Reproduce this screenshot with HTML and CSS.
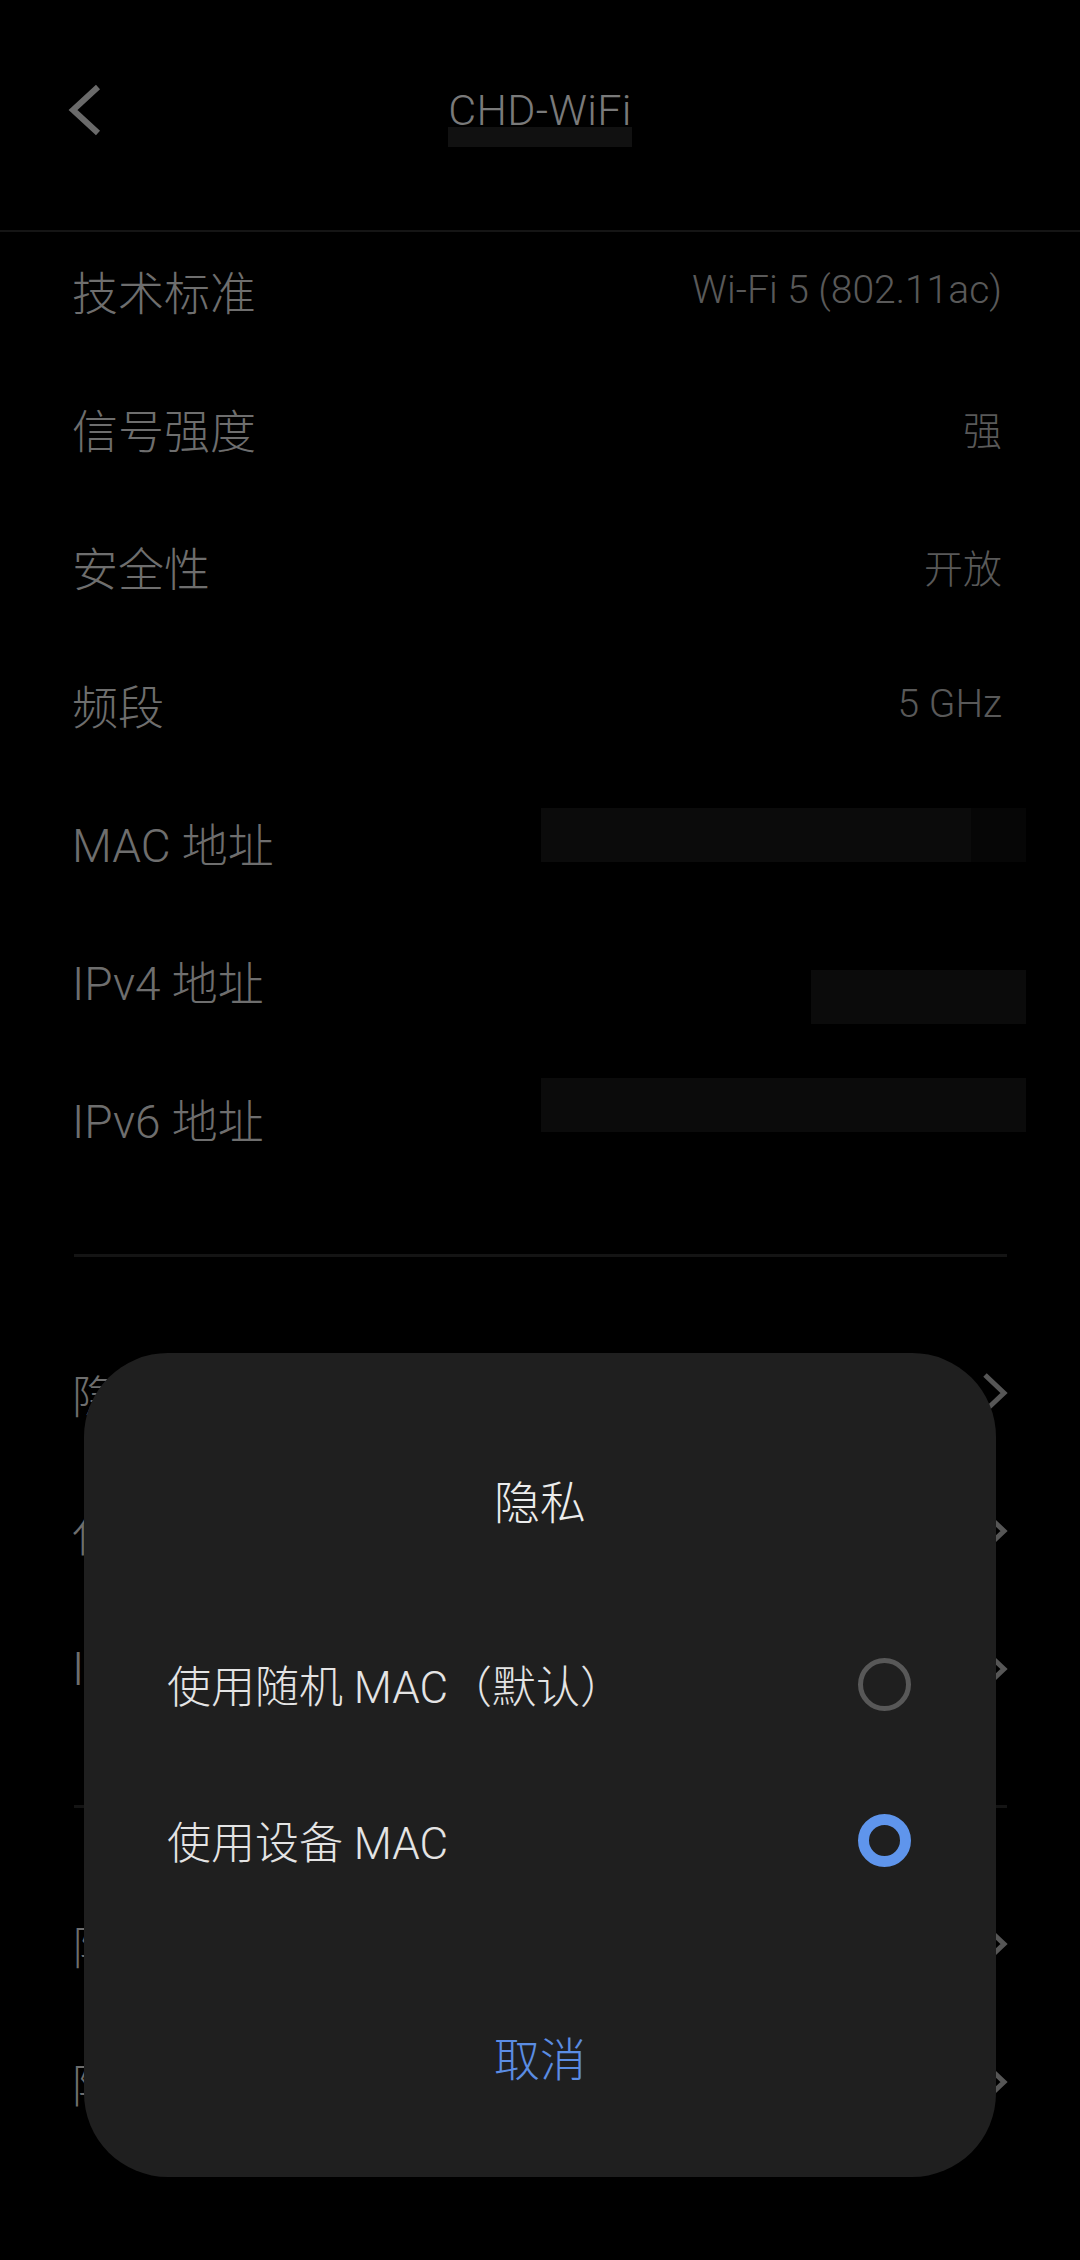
FILE: index.html
```html
<!DOCTYPE html>
<html lang="zh-CN">
<head>
<meta charset="utf-8">
<title>CHD-WiFi</title>
<link rel="stylesheet" href="styles.css">
</head>
<body>
<div class="screen">
  <header class="header">
    <div class="back">
      <svg width="36" height="52" viewBox="0 0 36 52"><polyline points="31,3 6,26 31,49" fill="none" stroke="#6a6a6a" stroke-width="6"/></svg>
    </div>
    <div class="title">CHD-WiFi</div>
    <div class="spacer"></div>
  </header>

  <section class="list">
    <div class="row"><span class="label">技术标准</span><span class="value">Wi-Fi 5 (802.11ac)</span></div>
    <div class="row"><span class="label">信号强度</span><span class="value">强</span></div>
    <div class="row"><span class="label">安全性</span><span class="value">开放</span></div>
    <div class="row"><span class="label">频段</span><span class="value">5 GHz</span></div>
    <div class="row"><span class="label">MAC 地址</span><span class="mask mask-mac"></span></div>
    <div class="row"><span class="label">IPv4 地址</span><span class="mask mask-v4"></span></div>
    <div class="row"><span class="label">IPv6 地址</span><span class="mask mask-v6"></span></div>
  </section>

  <div class="divider"></div>

  <section class="list list-links">
    <div class="row"><span class="label">隐私</span><span class="chev"><svg width="26" height="42" viewBox="0 0 26 42"><polyline points="3,3 22,21 3,39" fill="none" stroke="#565656" stroke-width="5"/></svg></span></div>
    <div class="row"><span class="label">代理</span><span class="chev"><svg width="26" height="42" viewBox="0 0 26 42"><polyline points="3,3 22,21 3,39" fill="none" stroke="#565656" stroke-width="5"/></svg></span></div>
    <div class="row"><span class="label">IP</span><span class="chev"><svg width="26" height="42" viewBox="0 0 26 42"><polyline points="3,3 22,21 3,39" fill="none" stroke="#565656" stroke-width="5"/></svg></span></div>
  </section>

  <div class="divider"></div>

  <section class="list list-links">
    <div class="row"><span class="label">限制流量</span><span class="chev"><svg width="26" height="42" viewBox="0 0 26 42"><polyline points="3,3 22,21 3,39" fill="none" stroke="#565656" stroke-width="5"/></svg></span></div>
    <div class="row"><span class="label">降低功耗</span><span class="chev"><svg width="26" height="42" viewBox="0 0 26 42"><polyline points="3,3 22,21 3,39" fill="none" stroke="#565656" stroke-width="5"/></svg></span></div>
  </section>

  <div class="dialog">
    <div class="dlg-title">隐私</div>
    <div class="options">
      <div class="option"><span class="opt-text">使用随机 MAC（默认）</span><span class="radio"></span></div>
      <div class="option"><span class="opt-text">使用设备 MAC</span><span class="radio on"></span></div>
    </div>
    <div class="cancel">取消</div>
  </div>
</div>
</body>
</html>
```

FILE: styles.css
```css
html, body {
  margin: 0;
  padding: 0;
  background: #000;
}

body {
  font-family: Roboto, "Noto Sans CJK SC", sans-serif;
  font-weight: 300;
  width: 1080px;
  height: 2260px;
  overflow: hidden;
}

.screen {
  position: relative;
  width: 1080px;
  height: 2260px;
  background: #000;
}

.header {
  position: relative;
  z-index: 2;
  height: 232px;
  box-sizing: border-box;
  padding-top: 80px;
  border-bottom: 2px solid #151515;
  background: #000;
  display: grid;
  grid-template-columns: 1fr auto 1fr;
  align-items: start;
}

.back {
  padding-left: 67px;
  padding-top: 4px;
  height: 52px;
}

.back svg {
  display: block;
}

.title {
  position: relative;
  font-size: 43px;
  line-height: 60px;
  color: #7a7a7a;
  letter-spacing: 0.3px;
}

.title::after {
  content: "";
  position: absolute;
  left: 0;
  right: 0;
  top: 47px;
  height: 20px;
  background: #111;
}

.list {
  margin-top: -11px;
  position: relative;
  z-index: 1;
}

.list-links {
  margin-top: 0;
}

.row {
  position: relative;
  height: 138px;
  display: flex;
  align-items: center;
  justify-content: space-between;
  padding: 0 78px 0 72px;
}

.label {
  font-size: 46px;
  color: #6e6e6e;
  white-space: nowrap;
}

.value {
  font-size: 39px;
  color: #595959;
  white-space: nowrap;
}

.mask {
  position: absolute;
  height: 54px;
  background: #0b0b0b;
}

.mask-mac {
  left: 541px;
  width: 430px;
  top: 35px;
  box-shadow: 55px 0 0 0 #060606;
}

.mask-v4 {
  left: 811px;
  width: 215px;
  top: 59px;
}

.mask-v6 {
  left: 541px;
  width: 485px;
  top: 29px;
}

.list-links .row {
  padding-right: 72px;
}

.chev {
  display: flex;
}

.chev svg {
  display: block;
}

.divider {
  height: 3px;
  background: #141414;
  margin: 67px 73px 67px 74px;
}

.dialog {
  position: absolute;
  z-index: 5;
  left: 84px;
  top: 1353px;
  width: 912px;
  height: 824px;
  box-sizing: border-box;
  border-radius: 84px;
  background: #1f1f1f;
  padding-top: 120px;
  display: flex;
  flex-direction: column;
}

.dlg-title {
  font-size: 46px;
  line-height: 60px;
  color: #ececec;
  text-align: center;
}

.options {
  margin-top: 73px;
}

.option {
  height: 156px;
  display: flex;
  align-items: center;
  justify-content: space-between;
  padding: 0 85px 0 83px;
}

.opt-text {
  font-size: 44px;
  color: #e4e4e4;
  white-space: nowrap;
}

.radio {
  width: 53px;
  height: 53px;
  box-sizing: border-box;
  border-radius: 50%;
  border: 5px solid #585858;
}

.radio.on {
  border: 11px solid #5f95ec;
}

.cancel {
  margin-top: 112px;
  font-size: 46px;
  line-height: 60px;
  color: #5b8de3;
  text-align: center;
}
```
